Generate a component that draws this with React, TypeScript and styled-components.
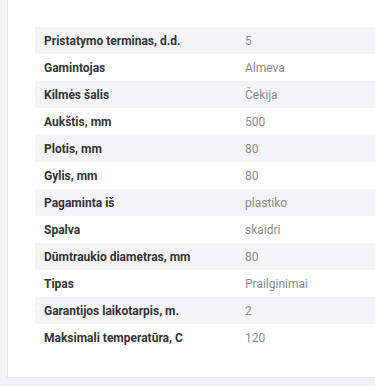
import React from "react";
import styled, { createGlobalStyle } from "styled-components";

const Global = createGlobalStyle`
  html, body { margin: 0; padding: 0; background: #f2f2f5; overflow: hidden; }
  body { font-family: Roboto, "Noto Sans", Arial, sans-serif; }
`;

const Page = styled.div`
  padding: 0 0 0 7px;
  width: 100%;
  height: 386px;
  box-sizing: border-box;
  overflow: hidden;
`;

const Card = styled.div`
  width: calc(100% + 20px);
  background: #ffffff;
  border: 1px solid #e4e4e8;
  border-top: none;
  padding: 27px 0 26px 27px;
  box-sizing: border-box;
`;

const Table = styled.table`
  width: 100%;
  border-collapse: collapse;
  font-size: 12px;
`;

const Row = styled.tr<{ $shade: boolean }>`
  height: 27px;
  background: ${(p) => (p.$shade ? "#f4f4f7" : "#ffffff")};
`;

const Label = styled.td`
  width: 200px;
  padding: 0 9px;
  box-sizing: border-box;
  font-weight: 700;
  color: #333336;
  white-space: nowrap;
`;

const Value = styled.td`
  padding: 0 10px;
  color: #8a8a8e;
  white-space: nowrap;
`;

const rows: [string, string][] = [
  ["Pristatymo terminas, d.d.", "5"],
  ["Gamintojas", "Almeva"],
  ["Kilmės šalis", "Čekija"],
  ["Aukštis, mm", "500"],
  ["Plotis, mm", "80"],
  ["Gylis, mm", "80"],
  ["Pagaminta iš", "plastiko"],
  ["Spalva", "skaidri"],
  ["Dūmtraukio diametras, mm", "80"],
  ["Tipas", "Prailginimai"],
  ["Garantijos laikotarpis, m.", "2"],
  ["Maksimali temperatūra, C", "120"],
];

export default function App() {
  return (
    <>
      <Global />
      <Page>
        <Card>
          <Table>
            <tbody>
              {rows.map(([k, v], i) => (
                <Row key={k} $shade={i % 2 === 0}>
                  <Label>{k}</Label>
                  <Value>{v}</Value>
                </Row>
              ))}
            </tbody>
          </Table>
        </Card>
      </Page>
    </>
  );
}
